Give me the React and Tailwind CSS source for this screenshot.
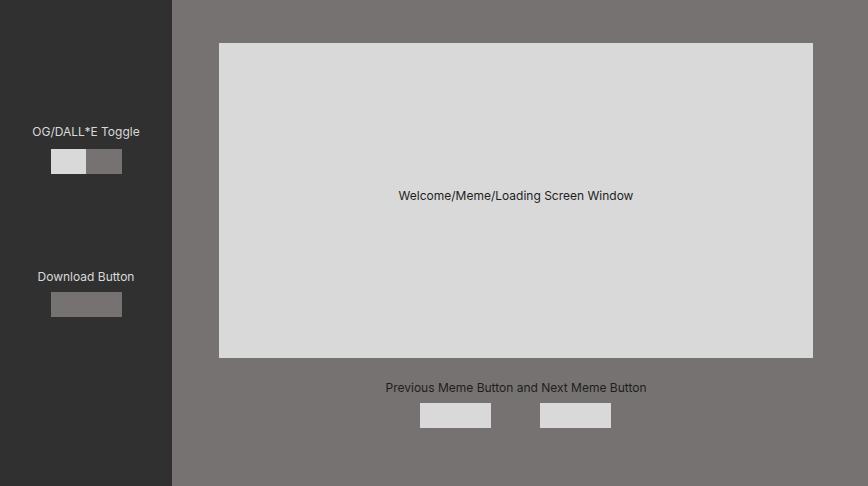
import React from 'react';

const Label = ({ children, className = '' }) => (
  <p className={`text-[12px] leading-4 ${className}`}>{children}</p>
);

export default function App() {
  return (
    <div className="flex w-[868px] h-[486px] font-['Inter',sans-serif]">
      {/* Sidebar */}
      <aside className="w-[172px] h-full bg-[#313031] flex flex-col items-center pt-[124px]">
        <Label className="text-[#d9d9d9]">OG/DALL*E Toggle</Label>
        <div className="mt-[9px] flex w-[71px] h-[25px]">
          <div className="w-[35px] bg-[#d9d9d9]" />
          <div className="flex-1 bg-[#767271]" />
        </div>

        <Label className="text-[#d9d9d9] mt-[95px]">Download Button</Label>
        <button type="button" className="mt-[7px] w-[71px] h-[25px] bg-[#767271]" />
      </aside>

      {/* Main */}
      <main className="flex-1 h-full bg-[#767271] pl-[47px] pt-[43px]">
        <div className="w-[594px] flex flex-col items-center">
          <div className="w-full h-[315px] bg-[#d9d9d9] flex items-center justify-center pb-[10px]">
            <Label className="text-[#1e1e1e]">Welcome/Meme/Loading Screen Window</Label>
          </div>
          <Label className="text-[#1e1e1e] mt-[22px]">Previous Meme Button and Next Meme Button</Label>
          <div className="mt-[7px] flex gap-[49px] pr-[2px]">
            <button type="button" className="w-[71px] h-[25px] bg-[#d9d9d9]" />
            <button type="button" className="w-[71px] h-[25px] bg-[#d9d9d9]" />
          </div>
        </div>
      </main>
    </div>
  );
}
